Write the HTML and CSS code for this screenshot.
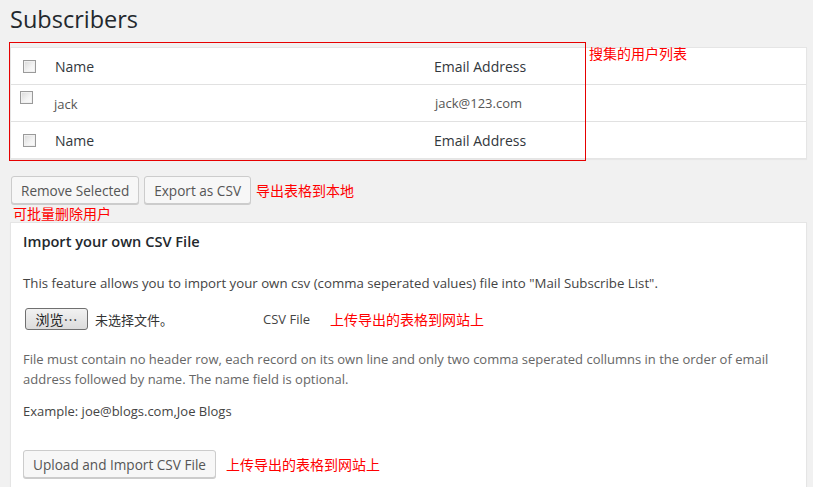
FILE: index.html
```html
<!DOCTYPE html>
<html lang="en">
<head>
<meta charset="utf-8">
<title>Subscribers</title>
<link rel="stylesheet" href="styles.css">
</head>
<body>
<div class="wrap">
  <h1 class="title">Subscribers</h1>

  <div class="list-wrap">
    <div class="table">
      <div class="row head">
        <div class="cell cb"><span class="check"></span></div>
        <div class="cell name">Name</div>
        <div class="cell email">Email Address</div>
      </div>
      <div class="row body">
        <div class="cell cb"><span class="check"></span></div>
        <div class="cell name">jack</div>
        <div class="cell email">jack@123.com</div>
      </div>
      <div class="row head foot">
        <div class="cell cb"><span class="check"></span></div>
        <div class="cell name">Name</div>
        <div class="cell email">Email Address</div>
      </div>
    </div>
    <div class="mark-box"></div>
    <span class="note note-list">搜集的用户列表</span>
  </div>

  <div class="actions">
    <button class="btn" type="button">Remove Selected</button>
    <button class="btn" type="button">Export as CSV</button>
    <span class="note">导出表格到本地</span>
  </div>
  <div class="note note-remove">可批量删除用户</div>

  <div class="panel">
    <h3 class="panel-title">Import your own CSV File</h3>
    <p class="intro">This feature allows you to import your own csv (comma seperated values) file into "Mail Subscribe List".</p>
    <div class="file-row">
      <span class="browse">浏览…</span>
      <span class="nofile">未选择文件。</span>
      <span class="csv-label">CSV File</span>
      <span class="note">上传导出的表格到网站上</span>
    </div>
    <p class="desc">File must contain no header row, each record on its own line and only two comma seperated collumns in the order of email address followed by name. The name field is optional.</p>
    <p class="example">Example: joe@blogs.com,Joe Blogs</p>
    <div class="upload-row">
      <button class="btn" type="button">Upload and Import CSV File</button>
      <span class="note">上传导出的表格到网站上</span>
    </div>
  </div>
</div>
</body>
</html>
```

FILE: styles.css
```css
html, body {
  margin: 0;
  padding: 0;
  background: #f1f1f1;
  color: #444;
  font-family: "Open Sans", "Noto Sans", sans-serif;
  font-size: 13px;
}

.wrap {
  padding: 0 6px 0 10px;
}

.title {
  margin: 0;
  padding: 5px 0 0 0;
  font-size: 23.5px;
  font-weight: 400;
  line-height: 29px;
  color: #23282d;
}

.list-wrap {
  position: relative;
  margin-top: 13px;
}

.table {
  background: #fff;
  border: 1px solid #e5e5e5;
  box-shadow: 0 1px 1px rgba(0,0,0,.04);
}

.row {
  display: flex;
  align-items: center;
  height: 36px;
  border-top: 1px solid #e1e1e1;
}
.row:first-child { border-top: none; }

.cell { flex: none; }
.cb { width: 44px; padding-left: 12px; box-sizing: border-box; display: flex; }
.name { width: 380px; }
.email { flex: 1; }

.head .cell { font-size: 14px; color: #32373c; }
.head .email { margin-left: -1px; }
.body .cell { color: #555; font-size: 13px; }
.body .cb { padding-left: 9px; align-self: flex-start; padding-top: 6px; }
.body .name { padding-top: 1px; margin-left: -1px; }
.body .email { margin-left: 1px; }

.check {
  display: block;
  width: 13px;
  height: 13px;
  box-sizing: border-box;
  border: 1px solid #9a9a9a;
  background: linear-gradient(135deg, #d9d9d9 0%, #f4f4f4 60%, #fbfbfb 100%);
  box-shadow: inset 0 0 0 1px #f0f0f0;
}

.mark-box {
  position: absolute;
  left: -1px;
  top: -5px;
  width: 575px;
  height: 117px;
  border: 1px solid #e60000;
  pointer-events: none;
}

.note {
  color: #ff0000;
  font-family: "Noto Sans CJK SC", sans-serif;
  font-size: 14px;
  line-height: 18px;
}

.note-list {
  position: absolute;
  left: 579px;
  top: -3px;
}

.actions {
  display: flex;
  align-items: center;
  gap: 5px;
  margin-top: 17px;
  padding-left: 1px;
}

.btn {
  height: 28px;
  padding: 0 9px;
  font-family: "Open Sans", "Noto Sans", sans-serif;
  font-size: 13.6px;
  color: #555;
  background: #f7f7f7;
  border: 1px solid #cccccc;
  border-radius: 3px;
  box-shadow: 0 1px 0 #cccccc;
  cursor: pointer;
}

.note-remove {
  margin: 1px 0 0 3px;
  line-height: 17px;
}

.panel {
  background: #fff;
  border: 1px solid #e5e5e5;
  box-shadow: 0 1px 1px rgba(0,0,0,.04);
  padding: 8px 12px 20px 12px;
  margin-top: 0;
}

.panel-title {
  margin: 0;
  font-size: 14.6px;
  font-weight: 600;
  color: #23282d;
  line-height: 20px;
}

.intro {
  margin: 22px 0 0 0;
  line-height: 20px;
  color: #444;
  font-size: 13.25px;
}

.file-row {
  display: flex;
  align-items: center;
  margin-top: 15px;
  padding-left: 2px;
}

.browse {
  display: inline-flex;
  align-items: center;
  justify-content: center;
  width: 63px;
  height: 22px;
  box-sizing: border-box;
  border: 1px solid #707070;
  border-radius: 3px;
  background: linear-gradient(#f2f2f2, #dcdcdc);
  font-family: "Noto Sans CJK SC", sans-serif;
  font-size: 14px;
  color: #222;
}

.nofile {
  margin-left: 7px;
  width: 168px;
  font-family: "Noto Sans CJK SC", sans-serif;
  font-size: 13px;
  color: #333;
}

.csv-label {
  width: 67px;
  color: #444;
}

.desc {
  margin: 19px 0 0 0;
  line-height: 20px;
  color: #666;
  font-size: 13px;
}

.example {
  margin: 12px 0 0 0;
  line-height: 20px;
  color: #444;
}

.upload-row {
  display: flex;
  align-items: center;
  gap: 10px;
  margin-top: 29px;
}
```
